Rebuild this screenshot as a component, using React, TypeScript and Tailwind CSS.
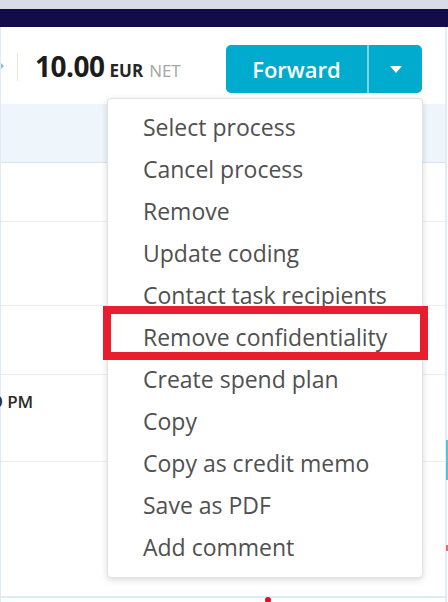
import React from 'react';

const menuItems = [
    'Select process',
    'Cancel process',
    'Remove',
    'Update coding',
    'Contact task recipients',
    'Remove confidentiality',
    'Create spend plan',
    'Copy',
    'Copy as credit memo',
    'Save as PDF',
    'Add comment',
];

const App = () => {
    return (
        <div className="relative w-[448px] h-[602px] overflow-hidden bg-white font-['Open_Sans','Noto_Sans',sans-serif]">
            {/* Browser / app top bars */}
            <div className="h-[9px] bg-[#d9dbe6]"></div>
            <div className="h-[18px] bg-[#130c4a]"></div>

            <div className="flex flex-col h-[575px] border-l border-[#dfeaf5] mr-[1px] border-r-2 border-r-[#e3ebf3]">
                {/* Header with amount and actions */}
                <div className="flex items-center h-[77px] shrink-0">
                    <div className="w-[16px] flex items-center">
                        <svg width="3" height="6" viewBox="0 0 3 6">
                            <path d="M0 0l3 3-3 3z" fill="#9bbad6" />
                        </svg>
                    </div>
                    <div className="w-px h-[28px] bg-[#efe9d2] mt-[2px]"></div>
                    <div className="flex items-baseline ml-[17px] mt-[1px]">
                        <span className="text-[28px] font-bold text-[#1c1c1c] tracking-[-0.5px]">10.00</span>
                        <span className="ml-[5px] text-[17px] font-bold text-[#262626]">EUR</span>
                        <span className="ml-[6px] text-[17px] text-[#a6a6a6]">NET</span>
                    </div>
                    <div className="ml-auto mr-[23px] mt-[7px] flex h-[48px] rounded-[5px] overflow-hidden bg-[#00abcd]">
                        <div className="w-[141px] flex items-center justify-center text-white text-[22px] font-semibold">
                            Forward
                        </div>
                        <div className="w-[2px] bg-[#7fd3e4]"></div>
                        <div className="w-[53px] flex items-center justify-center">
                            <svg width="12" height="7" viewBox="0 0 12 7">
                                <path d="M0 0h12L6 7z" fill="#ffffff" />
                            </svg>
                        </div>
                    </div>
                </div>

                {/* Background table */}
                <div className="h-[59px] shrink-0 bg-[#eef6fc] border-b border-[#d4e6f4]"></div>
                <div className="h-[59px] shrink-0 border-b border-[#ececec]"></div>
                <div className="h-[84px] shrink-0 border-b border-[#ececec]"></div>
                <div className="h-[69px] shrink-0 border-b border-[#ececec]"></div>
                <div className="h-[87px] shrink-0 border-b border-[#ececec] pt-[17px]">
                    <span className="block -ml-[8px] text-[17px] font-semibold text-[#2b2b2b] leading-[20px]">9 PM</span>
                </div>
                <div className="h-[136px] shrink-0 border-b-2 border-[#dcedf8]"></div>
            </div>

            {/* Dropdown menu */}
            <div className="absolute left-[107px] top-[98px] w-[316px] h-[480px] bg-white border border-[#e2e2e2] rounded-[4px] shadow-[0_2px_6px_rgba(0,0,0,0.15)] pt-[7px]">
                {menuItems.map(item => (
                    <div key={item} className="h-[42px] flex items-center pl-[35px] text-[23px] text-[#505050] whitespace-nowrap">
                        {item}
                    </div>
                ))}
            </div>

            {/* Highlight annotation */}
            <div className="absolute left-[103px] top-[306px] w-[325px] h-[54px] border-[8px] border-[#e81d2d]"></div>

            {/* Bits of the page at the edges */}
            <div className="absolute right-0 top-[440px] w-[2px] h-[40px] bg-[#55c1dc]"></div>
            <div className="absolute right-0 top-[545px] w-[2px] h-[6px] bg-[#ef6b6b]"></div>
            <div className="absolute left-[265px] top-[597px] w-[6px] h-[6px] rounded-full bg-[#e0101d]"></div>
        </div>
    );
};

export default App;
